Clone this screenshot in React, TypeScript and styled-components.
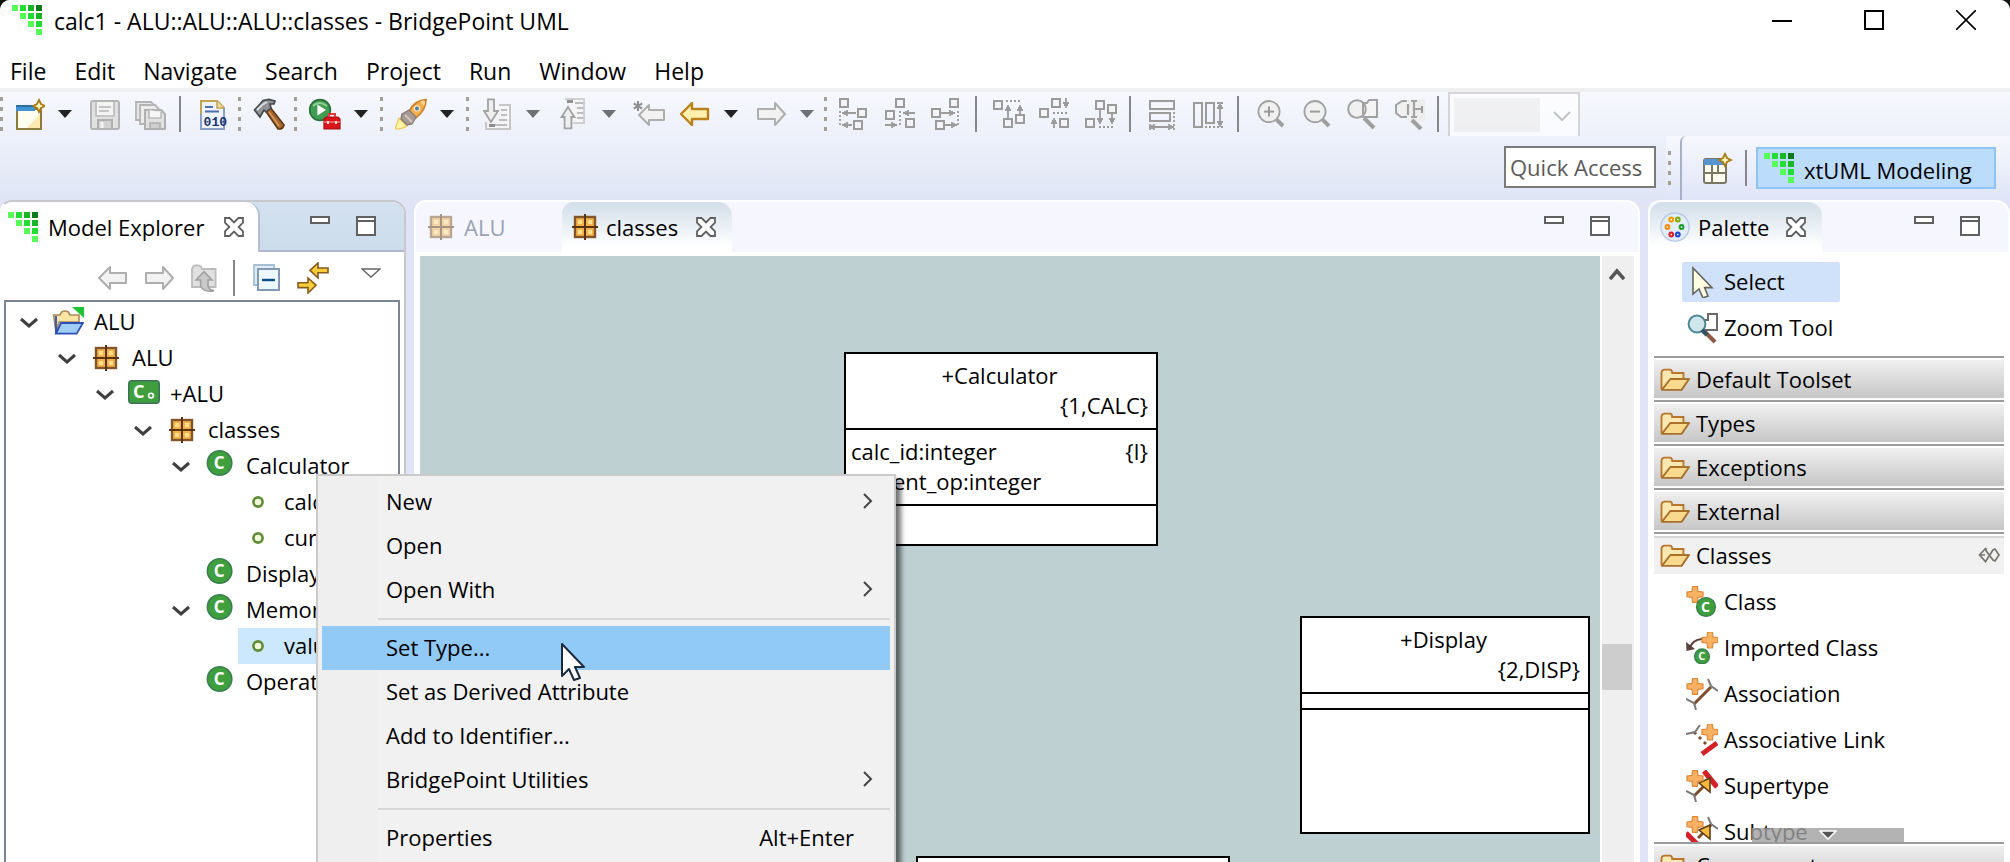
import React from "react";
import styled, { createGlobalStyle, css } from "styled-components";

const GlobalStyle = createGlobalStyle`
  * { box-sizing: border-box; }
  html, body { margin: 0; height: 100%; background: #10140c; }
  #root { height: 100%; }
  body, button, input, select {
    font-family: "Open Sans", "Noto Sans", sans-serif;
    font-size: 22px;
    line-height: 32px;
    color: #000;
  }
  button { border: 0; padding: 0; background: none; text-align: left; white-space: nowrap; }
  ul { list-style: none; margin: 0; padding: 0; }
  svg { display: block; flex: none; }
`;

/* ---------- icons ---------- */

type IconProps = { children: React.ReactNode; size?: number; crisp?: boolean; box?: string };

const Icon = ({ children, size = 32, crisp, box = "0 0 16 16" }: IconProps) => (
  <svg width={size} height={size} viewBox={box} fill="none" aria-hidden="true" shapeRendering={crisp ? "crispEdges" : "auto"}>
    {children}
  </svg>
);

const logoCells: [number, number, string][] = [
  [0, 0, "#55ff55"], [4, 0, "#22dd33"], [8, 0, "#18b525"], [12, 0, "#0f7a1a"],
  [4, 4, "#55ff55"], [8, 4, "#22dd33"], [12, 4, "#18b525"],
  [8, 8, "#55ff55"], [12, 8, "#22dd33"],
  [12, 12, "#55ff55"],
];

const Logo = () => (
  <Icon size={30} box="0 0 15 15" crisp>
    {logoCells.map(([x, y, c]) => <rect key={`${x}-${y}`} x={x} y={y} width="3" height="3" fill={c} />)}
  </Icon>
);

const Sparkle = ({ x, y }: { x: number; y: number }) => (
  <path d={`M${x} ${y - 3}L${x + 1} ${y - 1}L${x + 3} ${y}L${x + 1} ${y + 1}L${x} ${y + 3}L${x - 1} ${y + 1}L${x - 3} ${y}L${x - 1} ${y - 1}Z`} fill="#fff6c4" stroke="#a67c13" strokeWidth=".9" />
);

const NewIcon = () => (
  <Icon>
    <path d="M2 5.500H14V15.500H2Z" fill="#fffdf0" stroke="#8d7a3c" strokeWidth="1" />
    <path d="M7 15L13.500 8V15Z" fill="#ffe9ae" />
    <path d="M1.500 3.500H11V6.500H1.500Z" fill="#3f95d3" />
    <path d="M1.500 3.500H11V4.500H1.500Z" fill="#2d6c9f" />
    <Sparkle x={13} y={4} />
  </Icon>
);

const SaveIcon = () => (
  <Icon>
    <rect x="1" y="1.500" width="14" height="14" rx="1" fill="#e1e1e1" stroke="#b4b4b4" />
    <path d="M3.500 2V9H12.500V2" fill="#f3f3f3" stroke="#b9b9b9" strokeWidth=".8" />
    <path d="M5 4.500H11M5 6.500H10" stroke="#c5c5c5" />
    <path d="M4.500 15V11H11.500V15" fill="#d2d2d2" stroke="#b0b0b0" />
    <path d="M6.500 12V15" stroke="#f5f5f5" strokeWidth="1.500" />
  </Icon>
);

const SaveAllIcon = () => (
  <Icon>
    <path d="M.5 2H8L10 4V11H.500Z" fill="#e6e6e6" stroke="#b4b4b4" strokeWidth=".9" />
    <path d="M2.500 3.500H10L12 5.500V13H2.500Z" fill="#ececec" stroke="#b4b4b4" strokeWidth=".9" />
    <path d="M5 6H13L15 8V15.500H5Z" fill="#e1e1e1" stroke="#b0b0b0" />
    <path d="M7 6V10H13V7" fill="#f5f5f5" stroke="#bcbcbc" strokeWidth=".8" />
    <path d="M7.500 15V12.500H12.500V15" fill="#cfcfcf" stroke="#b0b0b0" strokeWidth=".8" />
  </Icon>
);

const BinaryIcon = () => (
  <Icon>
    <path d="M2 1.500H10L13.500 5V15.500H2Z" fill="#eef3fc" stroke="#8aa0c8" />
    <path d="M2 8V1.500H10L13.500 5" stroke="#c2a452" />
    <path d="M10 1.500V5H13.500" fill="#f0dca0" stroke="#c2a452" strokeWidth=".8" />
    <path d="M4 4.500H8M4 6.700H11" stroke="#4c6db0" />
    <text x="3.300" y="14" fontFamily="Liberation Mono, monospace" fontWeight="700" fontSize="6.500" fill="#17336f">010</text>
  </Icon>
);

const HammerIcon = () => (
  <Icon>
    <path d="M6 6L8.500 4.500L15.500 13.500Q15 15.800 12.500 15.500Z" fill="#a5672f" stroke="#5f3513" strokeWidth=".8" />
    <path d="M8 7L13 14" stroke="#d69a58" strokeWidth=".8" />
    <path d="M.7 6L3.500 3L5 1.200L8 .7L11 1.500L10.500 3L8.500 3L9 5L6.500 7L5.500 6L3.500 9.500Z" fill="#8f9396" stroke="#44484a" strokeWidth=".8" />
    <path d="M2 6L4.500 3.500L7 2" stroke="#d8dadb" />
  </Icon>
);

const RunIcon = () => (
  <Icon>
    <circle cx="5.500" cy="6" r="5.200" fill="#3f9c50" stroke="#2a6f3c" strokeWidth=".8" />
    <path d="M2 4Q5 1 9 4" stroke="#8fcf95" />
    <path d="M4.200 3.200L8.500 6L4.200 8.800Z" fill="#fff" />
    <path d="M7.500 10.500V15.500H15.500V10.500L14.500 9.500H8.500Z" fill="#d9171b" stroke="#a80d12" strokeWidth=".6" />
    <path d="M10 9.500V8H13V9.500" stroke="#e03a3d" />
    <path d="M7.500 12H15.500" stroke="#ff7a7a" strokeWidth=".7" />
    <path d="M9.500 11.500V13M13.500 11.500V13" stroke="#fff" strokeWidth=".8" />
  </Icon>
);

const RocketIcon = () => (
  <Icon>
    <path d="M0 15.500L2 10L6 14Q4 15.500 0 15.500Z" fill="#fff3a8" stroke="#e9c64c" strokeWidth=".6" />
    <path d="M7 6.500Q10 1 15.500 .8Q15.500 6 10.500 10Z" fill="#f4ae4e" stroke="#c9822a" strokeWidth=".8" />
    <path d="M12.500 1.800Q14 1 15 1.500Q15 3 14.500 4Z" fill="#fbd28c" />
    <circle cx="11" cy="5.200" r="1.300" fill="#4f7db5" stroke="#fbe3b4" strokeWidth=".6" />
    <path d="M3.500 8L7 6L10.500 9.500L8.500 13L6 13.500L3 10.500Z" fill="#a79a92" stroke="#8a7c74" strokeWidth=".7" />
    <path d="M5 8.500L8.500 12" stroke="#cfc6c0" />
  </Icon>
);

const StepIcon = ({ up }: { up?: boolean }) => (
  <Icon>
    {up ? (
      <>
        <path d="M4 .5H13.500V12.500H8" fill="#f4f4f6" stroke="#d0d0d0" />
        <path d="M5 1H8V2.500H5Z" fill="#8f8f8f" />
        <path d="M9 2.500H13M10 5H13M10 7.500H13M10 10H13" stroke="#bdbdbd" />
        <path d="M5.500 4.500L8.700 9.500H7.200V15.200H3.800V9.500H2.300Z" fill="#efefef" stroke="#a2a2a2" strokeWidth=".9" />
      </>
    ) : (
      <>
        <path d="M9 3.500H14.500V15.500H2.500V12" fill="#f4f4f6" stroke="#c6c6c6" />
        <path d="M10 6H13M10 8.500H13M9 11H13M7 13.500H13" stroke="#bdbdbd" />
        <path d="M4 13H7V14.500H4Z" fill="#8f8f8f" />
        <path d="M3.500 .7H6.500V6.500H8.500L5 12L1.500 6.500H3.500Z" fill="#efefef" stroke="#a2a2a2" strokeWidth=".9" />
      </>
    )}
  </Icon>
);

const ArrowIcon = ({ right, gold }: { right?: boolean; gold?: boolean }) => (
  <Icon>
    <path
      d={right ? "M15 8L10 2.500V5.500H1.500V10.500H10V13.500Z" : "M1 8L6.500 2.500V5.500H14.500V10.500H6.500V13.500Z"}
      fill={gold ? "#fff0ae" : "#f2f2f2"}
      stroke={gold ? "#b9801c" : "#aeaeae"}
      strokeLinejoin="round"
      strokeWidth={gold ? 1.2 : 1}
    />
  </Icon>
);

const LastEditIcon = () => (
  <Icon>
    <path d="M2.500 1.500V6.500M.4 2.700L4.600 5.300M4.600 2.700L.4 5.300" stroke="#8f8f8f" strokeWidth="1" />
    <path d="M3 8.500L8 3.500V6H15.500V11H8V13.500Z" fill="#f2f2f2" stroke="#aeaeae" strokeLinejoin="round" />
  </Icon>
);

type Dir = "l" | "r" | "u" | "d";
type AlignSpec = { boxes: [number, number][]; arrows: [number, number, number, Dir][]; dots: string };

const arrowPath = (x: number, y: number, len: number, d: Dir) => {
  if (d === "l") return `M${x} ${y}H${x + len}M${x + 2.5} ${y - 1.5}V${y + 1.5}M${x + 1.5} ${y - 1}V${y + 1}`;
  if (d === "r") return `M${x} ${y}H${x + len}M${x + len - 2.5} ${y - 1.5}V${y + 1.5}M${x + len - 1.5} ${y - 1}V${y + 1}`;
  if (d === "u") return `M${x} ${y}V${y + len}M${x - 1.5} ${y + 2.5}H${x + 1.5}M${x - 1} ${y + 1.5}H${x + 1}`;
  return `M${x} ${y}V${y + len}M${x - 1.5} ${y + len - 2.5}H${x + 1.5}M${x - 1} ${y + len - 1.5}H${x + 1}`;
};

const AlignIcon = ({ boxes, arrows, dots }: AlignSpec) => (
  <Icon>
    {boxes.map(([x, y]) => <rect key={`${x}-${y}`} x={x + .5} y={y + .5} width="4" height="4" fill="#f4f4f8" stroke="#9b9b9b" />)}
    {arrows.map(([x, y, len, d]) => <path key={`${x}-${y}`} d={arrowPath(x, y, len, d)} stroke="#9b9b9b" strokeWidth=".9" />)}
    <path d={dots} stroke="#9b9b9b" strokeWidth=".9" strokeDasharray="1 1" />
  </Icon>
);

const alignSpecs: Record<string, AlignSpec> = {
  "Align Left": { boxes: [[0, 0], [9, 5], [7, 11]], arrows: [[1.5, 7.5, 7, "l"], [1.5, 13.5, 5, "l"]], dots: "M.5 6.500V14" },
  "Align Center": { boxes: [[5, 0], [0, 6], [10, 10]], arrows: [[9, 7.5, 6, "l"], [0, 13.5, 6, "r"]], dots: "M7.500 6.500V14" },
  "Align Right": { boxes: [[9, 0], [0, 5], [2, 11]], arrows: [[5, 7.5, 7, "r"], [7, 13.5, 6, "r"]], dots: "M13.500 6.500V14" },
  "Align Top": { boxes: [[0, 1], [5, 10], [11, 8]], arrows: [[7.5, 3.5, 6.5, "u"], [13.5, 3.5, 4.5, "u"]], dots: "M6.500 1.500H14" },
  "Align Middle": { boxes: [[6, 0], [0, 5], [10, 10]], arrows: [[13.5, 0, 5, "d"], [7.5, 10, 5, "u"]], dots: "M7 7.500H14" },
  "Align Bottom": { boxes: [[5, 1], [11, 3], [0, 10]], arrows: [[7.5, 6, 7, "d"], [13.5, 8, 5, "d"]], dots: "M7 14.500H14" },
};

const MatchWidthIcon = () => (
  <Icon>
    <path d="M1.500 1.500H13.500V5.500H1.500ZM1.500 7.500H11.500V11.500H1.500Z" stroke="#9b9b9b" />
    <path d="M1 14.500H13.500M3.500 13V16M11 13V16M2.500 13.500V15.500M12 13.500V15.500" stroke="#9b9b9b" strokeWidth=".9" />
    <path d="M13.500 7V16M1.500 13V16" stroke="#9b9b9b" strokeWidth=".9" strokeDasharray="1 1" />
  </Icon>
);

const MatchHeightIcon = () => (
  <Icon>
    <path d="M.5 2.500H4.500V14.500H.500ZM6.500 2.500H10.500V12.500H6.500Z" stroke="#9b9b9b" />
    <path d="M13.500 2V14.500M12 5H15M12 12H15M12.500 4H14.500M12.500 13H14.500" stroke="#9b9b9b" strokeWidth=".9" />
    <path d="M6 14.500H15M12 2.500H16" stroke="#9b9b9b" strokeWidth=".9" strokeDasharray="1 1" />
  </Icon>
);

const ZoomIcon = ({ kind }: { kind: "in" | "out" | "page" | "all" }) => (
  <Icon>
    {kind === "in" || kind === "out" ? (
      <>
        <circle cx="7" cy="6.800" r="5.300" fill="#f0f0f0" stroke="#a2a2a2" strokeWidth=".9" />
        <path d="M4.500 6.800H9.500" stroke="#999" />
        {kind === "in" && <path d="M7 4.300V9.300" stroke="#999" />}
        <path d="M10.800 10.800L14 14" stroke="#9f9f9f" strokeWidth="2" />
      </>
    ) : kind === "page" ? (
      <>
        <path d="M7.500 2.500H10L11 1H15V9.500H8Z" fill="#f4f4f4" stroke="#a2a2a2" />
        <circle cx="5" cy="5.500" r="4.400" fill="#f0f0f0" stroke="#a2a2a2" />
        <path d="M8 2.500V9" stroke="#a2a2a2" />
        <path d="M8.500 10L13.500 15" stroke="#9f9f9f" strokeWidth="2" />
      </>
    ) : (
      <>
        <path d="M7.500 .7H16V12H7.500Z" fill="#eeeeee" />
        <path d="M7 1.500H4.500L1.500 3.500V7.500L4 9.500H7" fill="#f0f0f0" stroke="#a2a2a2" />
        <path d="M9 1.500H12M9 9.500H12M10.500 1.500V9.500M10.500 5.500H14.500M14.500 4V7.500M7.500 3V8.500" stroke="#a2a2a2" strokeWidth="1.100" />
        <path d="M9.500 11L14 15.500" stroke="#9f9f9f" strokeWidth="2" />
      </>
    )}
  </Icon>
);

const PerspectiveIcon = () => (
  <Icon>
    <rect x="1.500" y="3.500" width="11" height="12" rx="1" fill="#fffdf2" stroke="#7b7762" />
    <path d="M1.500 3.500H12.500V6.500H1.500Z" fill="#5b93cf" />
    <path d="M1.500 10.500H12.500M5.500 6.500V15.500M8.500 6.500V10.500" stroke="#7b7762" />
    <Sparkle x={12} y={4} />
  </Icon>
);

const CloseGlyph = () => (
  <Icon size={20} box="0 0 10 10">
    <path d="M.5 .500H2.800L5 2.700L7.200 .500H9.500V2.800L7.300 5L9.500 7.200V9.500H7.200L5 7.300L2.800 9.500H.500V7.200L2.700 5L.5 2.800Z" fill="#fff" stroke="#606060" strokeWidth=".9" />
  </Icon>
);

const MinGlyph = () => (
  <Icon size={20} box="0 0 10 10" crisp><path d="M.5 .500H9.500V3.500H.500Z" fill="#fff" stroke="#606060" /></Icon>
);
const MaxGlyph = () => (
  <Icon size={20} box="0 0 10 10" crisp>
    <path d="M.5 .500H9.500V9.500H.500Z" fill="#fff" stroke="#606060" />
    <path d="M0 2.500H10" stroke="#606060" />
  </Icon>
);

const PackageIcon = ({ faded }: { faded?: boolean }) => (
  <svg width="26" height="26" viewBox="0 0 13 13" fill="none" opacity={faded ? .5 : 1} aria-hidden="true">
    <rect x="1.500" y="1.500" width="10" height="10" fill="#f5b24a" stroke="#80562a" strokeWidth="1.200" />
    <path d="M3 3H5V5H3ZM8 3H10V5H8ZM3 8H5V10H3ZM8 8H10V10H8Z" fill="#ffe08e" />
    <path d="M6.500 0V13M0 6.500H13" stroke="#5a3310" />
  </svg>
);

const ProjectIcon = () => (
  <Icon>
    <path d="M.8 4.500H4L4.800 3Q6.500 2 8.200 3L9 4.500H13.500V8H3.500L2 13Z" fill="#fbe3a4" stroke="#a98a55" strokeWidth=".8" />
    <path d="M4.500 8.500H15.500L12.300 13.800H2Z" fill="#9fcdf4" stroke="#2c50b8" strokeWidth=".9" />
    <path d="M2 5V13.800" stroke="#2c50b8" strokeWidth=".9" />
    <path d="M10 .5H16V6Z" fill="#1fc435" />
  </Icon>
);

const ComponentIcon = () => (
  <Icon>
    <rect x=".4" y="1.400" width="15.200" height="11.200" rx="1.600" fill="#3f9f3f" stroke="#3a7553" strokeWidth=".8" />
    <text x="2.500" y="10" fontFamily="Open Sans, sans-serif" fontWeight="700" fontSize="9" fill="#fff">C</text>
    <circle cx="11.500" cy="8.800" r="1.200" stroke="#fff" strokeWidth=".8" />
  </Icon>
);

const ClassIcon = () => (
  <Icon>
    <circle cx="7.800" cy="6.500" r="6.100" fill="#3f9f3f" stroke="#37804d" strokeWidth=".8" />
    <text x="4.900" y="9.600" fontFamily="Open Sans, sans-serif" fontWeight="700" fontSize="8.500" fill="#fff">C</text>
  </Icon>
);

const AttributeIcon = () => (
  <Icon><circle cx="8" cy="8" r="2.300" fill="#f1f7d8" stroke="#5f8b35" strokeWidth="1.300" /></Icon>
);

const TreeChevron = () => (
  <svg width="18" height="18" viewBox="0 0 18 18" fill="none" aria-hidden="true"><path d="M1 6L9 13L17 6" stroke="#404040" strokeWidth="3" /></svg>
);

const UpFolderIcon = () => (
  <Icon>
    <path d="M1.500 12V3.500Q2 1.500 4 1.700Q6 1.500 6.500 3.500H13.300V12.500H1.500Z" fill="#e0e0e0" stroke="#bbb" strokeWidth=".9" />
    <path d="M7.500 4.800L11.500 9H9.500V12Q10 14 12.500 14.300Q7.500 15.500 5.800 12V9H3.500Z" fill="#c9c9c9" stroke="#a0a0a0" strokeWidth=".8" />
  </Icon>
);

const CollapseIcon = () => (
  <Icon>
    <path d="M1.500 1.500H11.500V11.500H1.500Z" fill="#dcecf8" stroke="#a7bfd4" strokeWidth=".9" />
    <path d="M3.500 3.500H14V14H3.500Z" fill="#eef9ff" stroke="#8298b4" />
    <path d="M5.500 9H12" stroke="#0f4b86" strokeWidth="1.200" />
  </Icon>
);

const LinkIcon = () => (
  <Icon>
    <path d="M6.500 4.200L10.500 .5V3H15.500V5.400H10.500V8Z" fill="#f5ce3a" stroke="#8b5a1c" strokeWidth=".8" />
    <path d="M9.500 11.600L5.500 8V10.400H.5V12.800H5.500V15.500Z" fill="#f5ce3a" stroke="#8b5a1c" strokeWidth=".8" />
  </Icon>
);

const paletteDots: [number, number, string][] = [
  [6, 4, "#f59c00"], [9.5, 4, "#7fae10"], [4, 8, "#f58a10"], [11.5, 8, "#1f9d2a"], [6, 12, "#d8262c"], [9.5, 12, "#1f4fd0"],
];
const PaletteIcon = () => (
  <Icon size={30}>
    <circle cx="8" cy="8" r="7.500" fill="#e3edf8" stroke="#b9cbe4" strokeWidth=".8" />
    {paletteDots.map(([x, y, c]) => <circle key={c} cx={x} cy={y} r="1" fill="#fff" stroke={c} strokeWidth="1.100" />)}
  </Icon>
);

const SelectIcon = () => (
  <Icon>
    <path d="M3.500 1V14L6.500 11.500L8.500 16L11 15L9.300 10.800H13Z" fill="#fffce4" stroke="#66645c" strokeWidth=".8" />
  </Icon>
);

const ZoomToolIcon = () => (
  <Icon>
    <path d="M9 4H11V1H15.500V9H9Z" fill="#fff" stroke="#6b6b6b" />
    <circle cx="5.500" cy="6" r="4.200" fill="#cfe6ea" stroke="#4f8794" />
    <path d="M9 9.500L14.500 15" stroke="#8a5b47" strokeWidth="2" />
    <path d="M8 9L10.500 11.500" stroke="#2f5560" strokeWidth="2" />
  </Icon>
);

const FolderIcon = () => (
  <Icon size={30}>
    <path d="M.8 13.500V4.500Q1 3 2.500 3H5.500Q6.500 3.300 6.500 4.800H12.500V7.500" fill="#fbe7b1" stroke="#b9762d" />
    <path d="M1 13.800L5.500 8H15.500L11.500 13.800Z" fill="#f9d98e" stroke="#a8712c" strokeLinejoin="round" />
  </Icon>
);

const Plus = ({ x, y }: { x: number; y: number }) => (
  <path d={`M${x - 1.2} ${y - 4}H${x + 1.2}L${x + 1.5} ${y - 1.5}L${x + 4} ${y - 1.2}V${y + 1.2}L${x + 1.5} ${y + 1.5}L${x + 1.2} ${y + 4}H${x - 1.2}L${x - 1.5} ${y + 1.5}L${x - 4} ${y + 1.2}V${y - 1.2}L${x - 1.5} ${y - 1.5}Z`} fill="#f8b062" stroke="#dc8838" strokeWidth=".6" />
);

const Tee = ({ d }: { d: string }) => <path d={d} stroke="#7a7a7a" strokeWidth="1" />;

const paletteIcons: Record<string, React.ReactNode> = {
  Class: (
    <Icon>
      <Plus x={4.500} y={4.200} />
      <circle cx="10" cy="10.500" r="4.700" fill="#3f9f3f" stroke="#37804d" strokeWidth=".7" />
      <text x="7.500" y="13.100" fontFamily="Open Sans, sans-serif" fontWeight="700" fontSize="7" fill="#fff">C</text>
    </Icon>
  ),
  "Imported Class": (
    <Icon>
      <path d="M2 8Q3 4 8 3.500" stroke="#59403c" />
      <path d="M0 5L4.500 8.500L.3 9.500Z" fill="#59403c" />
      <Plus x={12} y={4} />
      <circle cx="8" cy="12.200" r="3.700" fill="#3f9f3f" stroke="#37804d" strokeWidth=".7" />
      <text x="6.100" y="14.200" fontFamily="Open Sans, sans-serif" fontWeight="700" fontSize="5.500" fill="#fff">C</text>
    </Icon>
  ),
  Association: (
    <Icon>
      <path d="M4 13L12.500 4.500" stroke="#7d4d2c" strokeWidth="1.500" />
      <Tee d="M11 .5L12.500 4L16 6.500M0 10.500L4 12.500L5 16" />
      <Plus x={4.500} y={4.200} />
    </Icon>
  ),
  "Associative Link": (
    <Icon>
      <path d="M4 4L12 12" stroke="#7d4d2c" strokeWidth="1.400" strokeDasharray="1.500 2" />
      <Tee d="M0 5L4.500 4L7 .5" />
      <path d="M8 15L15.500 9.500" stroke="#d42027" strokeWidth="2.400" />
      <Plus x={12} y={4} />
    </Icon>
  ),
  Supertype: (
    <Icon>
      <path d="M4 13L9 8" stroke="#7d4d2c" strokeWidth="1.500" />
      <Tee d="M0 10.500L4 12.500L5 16" />
      <path d="M9 .5L15.500 8.500" stroke="#d42027" strokeWidth="2.600" />
      <path d="M12 4V11L6.500 6.500Z" fill="#f7b93c" stroke="#5d3d1a" strokeWidth=".8" />
      <Plus x={4.500} y={4.200} />
    </Icon>
  ),
  Subtype: (
    <Icon>
      <path d="M6 11L12.500 4.500" stroke="#7d4d2c" strokeWidth="1.500" />
      <Tee d="M11 .5L12.500 4L16 6.500" />
      <path d="M0 8.500L7 15.500" stroke="#d42027" strokeWidth="2.600" />
      <path d="M12 4.500V11.500L6.500 7Z" fill="#f7b93c" stroke="#5d3d1a" strokeWidth=".8" />
      <Plus x={4.500} y={4.200} />
    </Icon>
  ),
};

const PinIcon = () => (
  <svg width="22" height="16" viewBox="0 0 22 16" fill="none" aria-hidden="true">
    <path d="M9 2.500L7.500 1.500L1.500 8L7.500 14.500L15 3L17 2L21 8L17 14L15 13L7.500 3M3 8H7" stroke="#77756c" strokeWidth="1.700" />
  </svg>
);

/* ---------- window frame ---------- */

const Window = styled.main`
  position: relative;
  display: flex;
  flex-direction: column;
  height: 100vh;
  min-height: 600px;
  overflow: hidden;
  background: #e1e4f7;
  border-radius: 10px 10px 0 0;
`;

const TitleBar = styled.header`
  display: flex;
  align-items: center;
  height: 40px;
  padding: 0 0 0 12px;
  background: #fff;
`;

const Title = styled.h1`
  flex: 1;
  margin: 0 0 0 12px;
  padding-top: 2px;
  font-size: 23px;
  font-weight: 400;
`;

const FrameButton = styled.button`
  display: grid;
  place-items: center;
  width: 92px;
  height: 40px;
  padding-left: 4px;
`;

const MenuBar = styled.nav`
  display: flex;
  gap: 28px;
  padding: 15px 10px 0;
  height: 48px;
  background: #fff;
`;

const MenuButton = styled.button`
  height: 32px;
  font-size: 23px;
`;

const ToolArea = styled.section`
  border-top: 4px solid #f0f0f0;
  background: linear-gradient(#f7f8fe, #dfe5f5);
`;

const ToolRow = styled.div`
  display: flex;
  align-items: center;
  height: 44px;
`;

const ToolButton = styled.button`
  display: grid;
  place-items: center;
  width: 46px;
  height: 44px;
`;

const DropButton = styled.button<{ $dim?: boolean }>`
  display: grid;
  place-items: center;
  width: 30px;
  height: 44px;
  padding-right: 4px;
  &::after {
    content: "";
    border: 7px solid transparent;
    border-top: 8px solid ${p => (p.$dim ? "#6f7275" : "#222")};
    border-bottom: 0;
  }
`;

const Handle = styled.span<{ $width?: number }>`
  width: ${p => p.$width ?? 10}px;
  height: 34px;
  background: repeating-linear-gradient(#a39f92 0 4px, transparent 4px 10px) no-repeat ${p => (p.$width ? 0 : 2)}px 0 / 3px 100%;
`;

const Separator = styled.span`
  width: 16px;
  height: 36px;
  background: linear-gradient(#85878c, #85878c) no-repeat 5px 0 / 2px 100%;
`;

const ZoomCombo = styled.select`
  appearance: none;
  width: 132px;
  height: 44px;
  margin: 0;
  padding: 0;
  border: 2px solid #c9c9cb;
  border-bottom: 0;
  border-radius: 0;
  background:
    linear-gradient(#efefef, #efefef) no-repeat 4px 4px / 86px 34px,
    url("data:image/svg+xml,%3Csvg xmlns='http://www.w3.org/2000/svg' width='18' height='12' fill='none'%3E%3Cpath d='M1 2l8 8 8-8' stroke='%23b0b0b0' stroke-width='2'/%3E%3C/svg%3E") no-repeat 103px 16px,
    #fff;
`;

const AccessRow = styled.div`
  display: flex;
  justify-content: flex-end;
  align-items: center;
  height: 64px;
`;

const QuickAccess = styled.input`
  width: 152px;
  height: 42px;
  margin: 0 10px 2px 0;
  padding: 0 4px;
  border: 2px solid #7a7a7a;
  background: #fff;
  &::placeholder { color: #5a5a5a; opacity: 1; }
`;

const Perspectives = styled.div`
  display: flex;
  align-items: center;
  height: 64px;
  padding-right: 14px;
  background: linear-gradient(#f7f8fe, #dfe5f7);
`;

const Curve = styled.span`
  width: 6px;
  height: 64px;
  margin: 0 8px 0 4px;
  border-left: 2px solid #a9b0c6;
  border-top-left-radius: 6px;
`;

const PerspectiveButton = styled.button`
  display: flex;
  align-items: center;
  gap: 10px;
  height: 42px;
  width: 240px;
  padding: 0 6px;
  border: 2px solid #8fc4f8;
  background: #bbdcfa;
`;

const PerspectiveName = styled.span`padding-top: 4px;`;

/* ---------- work area ---------- */

const Workbench = styled.div`
  flex: 1;
  min-height: 0;
  display: grid;
  grid-template-columns: 406px minmax(0, 1fr) 362px;
  gap: 8px;
`;

const Panel = styled.section<{ $active?: boolean }>`
  display: flex;
  flex-direction: column;
  min-height: 0;
  min-width: 0;
  overflow: hidden;
  background: #fff;
  border: 2px solid ${p => (p.$active ? "#c6c8cc" : "#fff")};
  border-left-color: #fff;
  border-bottom: 0;
  border-radius: 12px 14px 0 0;
`;

const PanelHeader = styled.div<{ $active?: boolean }>`
  display: flex;
  height: 50px;
  flex: none;
  background: ${p => (p.$active ? "linear-gradient(#d3e1f0, #cddcea)" : "#f5f6fe")};
`;

const Tab = styled.button<{ $look?: "white" | "tinted" }>`
  display: flex;
  align-items: center;
  height: 50px;
  gap: 10px;
  padding: 0 16px 0 12px;
  ${p => p.$look === "white" && css`background: #fff; padding: 0 14px 0 6px; border-right: 2px solid #b3bfd4; border-top-right-radius: 14px;`}
  ${p => p.$look === "tinted" && css`background: linear-gradient(#d2deea, #fff 90%); gap: 8px; padding: 0 16px 0 10px; border-radius: 12px 14px 0 0;`}
  ${p => !p.$look && css`width: 146px; color: #9aa3b5;`}
`;

const TabLabel = styled.span<{ $width: number }>`
  width: ${p => p.$width}px;
`;

const HeaderTools = styled.div<{ $ruled?: boolean }>`
  flex: 1;
  display: flex;
  justify-content: flex-end;
  gap: 26px;
  padding: 14px 28px 0 0;
  ${p => p.$ruled && css`border-bottom: 2px solid #b0b8cc;`}
`;

const GlyphButton = styled.button`
  height: 20px;
`;

const ViewToolbar = styled.div`
  display: flex;
  align-items: center;
  justify-content: flex-end;
  height: 48px;
  padding: 4px 10px 0 0;
`;

const ViewMenuButton = styled(ToolButton)`
  margin-left: 12px;
`;

const Tree = styled.ul`
  flex: 1;
  margin: 0 4px 0 2px;
  padding-top: 2px;
  border: 2px solid #7c8494;
  border-bottom: 0;
`;

const TreeRow = styled.li<{ $level: number }>`
  display: flex;
  align-items: center;
  height: 36px;
  padding-left: ${p => 14 + p.$level * 38}px;
`;

const Twist = styled.span`
  flex: none;
  width: 28px;
`;

const TreeItem = styled.span<{ $selected?: boolean }>`
  display: flex;
  align-items: center;
  gap: 10px;
  height: 36px;
  padding: 0 4px;
  background: ${p => (p.$selected ? "#cce8ff" : "none")};
`;

const TreeIcon = styled.span`
  display: grid;
  place-items: center;
  width: 32px;
`;

const Label = styled.span`
  padding-bottom: 3px;
`;

const EditorBody = styled.div`
  flex: 1;
  min-height: 0;
  display: flex;
  padding: 4px 4px 0;
`;

const Canvas = styled.div`
  position: relative;
  flex: 1;
  margin-right: 2px;
  overflow: hidden;
  background: #bfd0d3;
`;

const ClassBox = styled.article<{ $x: number; $y: number; $w: number; $h: number }>`
  position: absolute;
  left: ${p => p.$x}px;
  top: ${p => p.$y}px;
  width: ${p => p.$w}px;
  height: ${p => p.$h}px;
  border: 2px solid #000;
  background: #fff;
  line-height: 30px;
`;

const Compartment = styled.div<{ $h: number }>`
  height: ${p => p.$h}px;
  padding: 6px 8px 0 5px;
  border-bottom: 2px solid #000;
`;

const ClassName = styled.div`text-align: center;`;
const KeyLetters = styled.div`text-align: right;`;
const Attribute = styled.div`
  display: flex;
  justify-content: space-between;
`;

const ScrollTrack = styled.div`
  display: flex;
  flex-direction: column;
  align-items: flex-start;
  width: 32px;
  background: #efefef;
`;

const ScrollButton = styled.button`
  display: grid;
  place-items: center;
  width: 30px;
  height: 36px;
`;

const ScrollThumb = styled.span`
  width: 30px;
  height: 46px;
  margin-top: 352px;
  background: #cdcdcd;
`;

/* ---------- palette ---------- */

const PaletteBody = styled.div`
  flex: 1;
  min-height: 0;
  display: flex;
  flex-direction: column;
  padding: 0 4px;
`;

const ToolList = styled.div<{ $top: number }>`
  display: flex;
  flex-direction: column;
  align-items: flex-start;
  gap: 6px;
  padding: ${p => p.$top}px 0 8px 28px;
`;

const ToolEntry = styled.button<{ $selected?: boolean }>`
  flex: none;
  display: flex;
  align-items: center;
  gap: 6px;
  height: 40px;
  min-width: 158px;
  padding: 0 4px;
  border-radius: 2px;
  background: ${p => (p.$selected ? "#cfe2fa" : "none")};
`;

const Drawer = styled.button<{ $open?: boolean }>`
  flex: none;
  display: flex;
  align-items: center;
  gap: 6px;
  height: 44px;
  padding: 2px 4px 0 6px;
  border-top: 2px solid #9c9c9c;
  border-bottom: 2px solid #fff;
  background: linear-gradient(#fff 2px, #f0f0f0 2px, #c6c6c6);
  ${p => p.$open && css`background: linear-gradient(#fff 2px, #d6d6d6 2px 4px, #f1f1f1 4px);`}
`;

const DrawerName = styled.span`flex: 1;`;

const OpenDrawer = styled.div`
  position: relative;
  flex: 1;
  min-height: 0;
  overflow: hidden;
`;

const ScrollDown = styled.button`
  position: absolute;
  left: 98px;
  bottom: 0;
  width: 152px;
  height: 14px;
  display: grid;
  place-items: center;
  background: rgba(160, 160, 160, .8);
`;

const LastDrawer = styled.div`
  flex: none;
  display: flex;
  flex-direction: column;
  height: 20px;
  overflow: hidden;
`;

/* ---------- context menu ---------- */

const ContextMenu = styled.div`
  position: absolute;
  left: 316px;
  top: 474px;
  width: 580px;
  display: flex;
  flex-direction: column;
  padding: 4px;
  border: 2px solid #cbcbcb;
  background: linear-gradient(90deg, #efefef 60px, #f1f1f1 60px);
  box-shadow: 5px 6px 5px rgba(0, 0, 0, .55);
`;

const MenuItem = styled.button<{ $hot?: boolean }>`
  display: flex;
  align-items: center;
  justify-content: space-between;
  height: 44px;
  padding: 0 16px 2px 64px;
  background: ${p => (p.$hot ? "#91c9f7" : "none")};
`;

const Shortcut = styled.span`padding-right: 20px;`;

const MenuRule = styled.hr`
  width: 512px;
  height: 2px;
  margin: 6px 0 6px auto;
  border: 0;
  background: #d7d7d7;
`;

const Pointer = styled.svg`
  position: absolute;
  left: 242px;
  top: 166px;
`;

/* ---------- data ---------- */

const menus = ["File", "Edit", "Navigate", "Search", "Project", "Run", "Window", "Help"];

type Node = { name: string; level: number; icon: React.ReactNode; open?: boolean; selected?: boolean };
const nodes: Node[] = [
  { name: "ALU", level: 0, icon: <ProjectIcon />, open: true },
  { name: "ALU", level: 1, icon: <PackageIcon />, open: true },
  { name: "+ALU", level: 2, icon: <ComponentIcon />, open: true },
  { name: "classes", level: 3, icon: <PackageIcon />, open: true },
  { name: "Calculator", level: 4, icon: <ClassIcon />, open: true },
  { name: "calc_id", level: 5, icon: <AttributeIcon /> },
  { name: "current_op", level: 5, icon: <AttributeIcon /> },
  { name: "Display", level: 4, icon: <ClassIcon /> },
  { name: "Memory", level: 4, icon: <ClassIcon />, open: true },
  { name: "value", level: 5, icon: <AttributeIcon />, selected: true },
  { name: "Operator", level: 4, icon: <ClassIcon /> },
];

const Tool = ({ label, children }: { label: string; children: React.ReactNode }) => (
  <ToolButton type="button" aria-label={label}>{children}</ToolButton>
);

const PanelTools = ({ ruled }: { ruled?: boolean }) => (
  <HeaderTools $ruled={ruled}>
    <GlyphButton type="button" aria-label="Minimize view"><MinGlyph /></GlyphButton>
    <GlyphButton type="button" aria-label="Maximize view"><MaxGlyph /></GlyphButton>
  </HeaderTools>
);

const SubmenuArrow = () => (
  <svg width="12" height="16" viewBox="0 0 12 16" fill="none" aria-hidden="true"><path d="M2 1L9 8L2 15" stroke="#444" strokeWidth="2" /></svg>
);

export default function App() {
  return (
    <Window>
      <GlobalStyle />
      <TitleBar>
        <Logo />
        <Title>calc1 - ALU::ALU::ALU::classes - BridgePoint UML</Title>
        <FrameButton type="button" aria-label="Minimize">
          <Icon size={20} box="0 0 20 20" crisp><path d="M0 11H20" stroke="#000" strokeWidth="2" /></Icon>
        </FrameButton>
        <FrameButton type="button" aria-label="Maximize">
          <Icon size={20} box="0 0 20 20" crisp><path d="M1 1H19V19H1Z" stroke="#000" strokeWidth="2" /></Icon>
        </FrameButton>
        <FrameButton type="button" aria-label="Close">
          <Icon size={20} box="0 0 20 20"><path d="M0 0L20 20M20 0L0 20" stroke="#000" strokeWidth="1.600" /></Icon>
        </FrameButton>
      </TitleBar>
      <MenuBar>{menus.map(m => <MenuButton key={m} type="button">{m}</MenuButton>)}</MenuBar>

      <ToolArea>
        <ToolRow>
          <Handle $width={6} />
          <Tool label="New"><NewIcon /></Tool>
          <DropButton type="button" aria-label="New options" />
          <Tool label="Save"><SaveIcon /></Tool>
          <Tool label="Save All"><SaveAllIcon /></Tool>
          <Separator />
          <Tool label="Binary"><BinaryIcon /></Tool>
          <Handle />
          <Tool label="Build"><HammerIcon /></Tool>
          <Handle />
          <Tool label="External Tools"><RunIcon /></Tool>
          <DropButton type="button" aria-label="External tools options" />
          <Handle />
          <Tool label="Launch"><RocketIcon /></Tool>
          <DropButton type="button" aria-label="Launch options" />
          <Handle />
          <Tool label="Next Annotation"><StepIcon /></Tool>
          <DropButton type="button" aria-label="Next options" $dim />
          <Tool label="Previous Annotation"><StepIcon up /></Tool>
          <DropButton type="button" aria-label="Previous options" $dim />
          <Tool label="Last Edit Location"><LastEditIcon /></Tool>
          <Tool label="Back"><ArrowIcon gold /></Tool>
          <DropButton type="button" aria-label="Back options" />
          <Tool label="Forward"><ArrowIcon right /></Tool>
          <DropButton type="button" aria-label="Forward options" $dim />
          <Handle $width={8} />
          {Object.entries(alignSpecs).map(([name, spec], i) => (
            <React.Fragment key={name}>
              {i === 3 && <Separator />}
              <Tool label={name}><AlignIcon {...spec} /></Tool>
            </React.Fragment>
          ))}
          <Separator />
          <Tool label="Match Width"><MatchWidthIcon /></Tool>
          <Tool label="Match Height"><MatchHeightIcon /></Tool>
          <Separator />
          <Tool label="Zoom In"><ZoomIcon kind="in" /></Tool>
          <Tool label="Zoom Out"><ZoomIcon kind="out" /></Tool>
          <Tool label="Zoom Page"><ZoomIcon kind="page" /></Tool>
          <Tool label="Zoom Selection"><ZoomIcon kind="all" /></Tool>
          <Separator />
          <ZoomCombo aria-label="Zoom level" disabled />
        </ToolRow>
        <AccessRow>
          <QuickAccess aria-label="Quick Access" placeholder="Quick Access" />
          <Perspectives>
            <Handle />
            <Curve />
            <Tool label="Open Perspective"><PerspectiveIcon /></Tool>
            <Separator />
            <PerspectiveButton type="button"><Logo /><PerspectiveName>xtUML Modeling</PerspectiveName></PerspectiveButton>
          </Perspectives>
        </AccessRow>
      </ToolArea>

      <Workbench>
        <Panel $active>
          <PanelHeader $active>
            <Tab type="button" $look="white">
              <Logo />
              <TabLabel $width={166}>Model Explorer</TabLabel>
              <CloseGlyph />
            </Tab>
            <PanelTools ruled />
          </PanelHeader>
          <ViewToolbar>
            <Tool label="Back"><ArrowIcon /></Tool>
            <Tool label="Forward"><ArrowIcon right /></Tool>
            <Tool label="Up"><UpFolderIcon /></Tool>
            <Separator />
            <Tool label="Collapse All"><CollapseIcon /></Tool>
            <Tool label="Link with Editor"><LinkIcon /></Tool>
            <ViewMenuButton type="button" aria-label="View Menu">
              <svg width="20" height="26" viewBox="0 0 20 26" fill="none" aria-hidden="true"><path d="M1 4H19L10 12Z" fill="#fff" stroke="#666" strokeWidth="1.500" /></svg>
            </ViewMenuButton>
          </ViewToolbar>
          <Tree role="tree">
            {nodes.map((n, i) => (
              <TreeRow key={i} $level={n.level} role="treeitem" aria-selected={!!n.selected}>
                <Twist>{n.open && <TreeChevron />}</Twist>
                <TreeItem $selected={n.selected}><TreeIcon>{n.icon}</TreeIcon><Label>{n.name}</Label></TreeItem>
              </TreeRow>
            ))}
          </Tree>
        </Panel>

        <Panel>
          <PanelHeader>
            <Tab type="button"><PackageIcon faded />ALU</Tab>
            <Tab type="button" $look="tinted">
              <PackageIcon />
              <TabLabel $width={82}>classes</TabLabel>
              <CloseGlyph />
            </Tab>
            <PanelTools />
          </PanelHeader>
          <EditorBody>
            <Canvas>
              <ClassBox $x={424} $y={96} $w={314} $h={194}>
                <Compartment $h={76}>
                  <ClassName>+Calculator</ClassName>
                  <KeyLetters>{"{1,CALC}"}</KeyLetters>
                </Compartment>
                <Compartment $h={76}>
                  <Attribute><span>calc_id:integer</span><span>{"{I}"}</span></Attribute>
                  <Attribute>current_op:integer</Attribute>
                </Compartment>
              </ClassBox>
              <ClassBox $x={880} $y={360} $w={290} $h={218}>
                <Compartment $h={76}>
                  <ClassName>+Display</ClassName>
                  <KeyLetters>{"{2,DISP}"}</KeyLetters>
                </Compartment>
                <Compartment $h={16} />
              </ClassBox>
              <ClassBox $x={496} $y={600} $w={314} $h={194} />
            </Canvas>
            <ScrollTrack>
              <ScrollButton type="button" aria-label="Scroll up">
                <svg width="16" height="14" viewBox="0 0 16 14" fill="none" aria-hidden="true"><path d="M1 12L8 4L15 12" stroke="#555" strokeWidth="3.500" /></svg>
              </ScrollButton>
              <ScrollThumb />
            </ScrollTrack>
          </EditorBody>
        </Panel>

        <Panel>
          <PanelHeader>
            <Tab type="button" $look="tinted">
              <PaletteIcon />
              <TabLabel $width={80}>Palette</TabLabel>
              <CloseGlyph />
            </Tab>
            <PanelTools />
          </PanelHeader>
          <PaletteBody>
            <ToolList $top={10}>
              <ToolEntry type="button" $selected><SelectIcon /><Label>Select</Label></ToolEntry>
              <ToolEntry type="button"><ZoomToolIcon /><Label>Zoom Tool</Label></ToolEntry>
            </ToolList>
            {["Default Toolset", "Types", "Exceptions", "External"].map(d => (
              <Drawer key={d} type="button"><FolderIcon /><DrawerName>{d}</DrawerName></Drawer>
            ))}
            <Drawer type="button" $open><FolderIcon /><DrawerName>Classes</DrawerName><PinIcon /></Drawer>
            <OpenDrawer>
              <ToolList $top={6}>
                {Object.entries(paletteIcons).map(([name, icon]) => (
                  <ToolEntry key={name} type="button">{icon}<Label>{name}</Label></ToolEntry>
                ))}
              </ToolList>
              <ScrollDown type="button" aria-label="Scroll down">
                <svg width="18" height="12" viewBox="0 0 18 12" aria-hidden="true"><path d="M1 2H17L9 10Z" fill="#555" stroke="#fff" strokeWidth="1.500" /></svg>
              </ScrollDown>
            </OpenDrawer>
            <LastDrawer>
              <Drawer type="button"><FolderIcon /><DrawerName>Components</DrawerName></Drawer>
            </LastDrawer>
          </PaletteBody>
        </Panel>
      </Workbench>

      <ContextMenu role="menu">
        <MenuItem type="button" role="menuitem">New<SubmenuArrow /></MenuItem>
        <MenuItem type="button" role="menuitem">Open</MenuItem>
        <MenuItem type="button" role="menuitem">Open With<SubmenuArrow /></MenuItem>
        <MenuRule />
        <MenuItem type="button" role="menuitem" $hot>Set Type...</MenuItem>
        <MenuItem type="button" role="menuitem">Set as Derived Attribute</MenuItem>
        <MenuItem type="button" role="menuitem">Add to Identifier...</MenuItem>
        <MenuItem type="button" role="menuitem">BridgePoint Utilities<SubmenuArrow /></MenuItem>
        <MenuRule />
        <MenuItem type="button" role="menuitem">Properties<Shortcut>Alt+Enter</Shortcut></MenuItem>
        <Pointer width="26" height="40" viewBox="0 0 26 40" aria-hidden="true">
          <path d="M2 2V34L9 27L14 38L20 36L15 25H24Z" fill="#fff" stroke="#1d2a3a" strokeWidth="2" strokeLinejoin="round" />
        </Pointer>
      </ContextMenu>
    </Window>
  );
}
